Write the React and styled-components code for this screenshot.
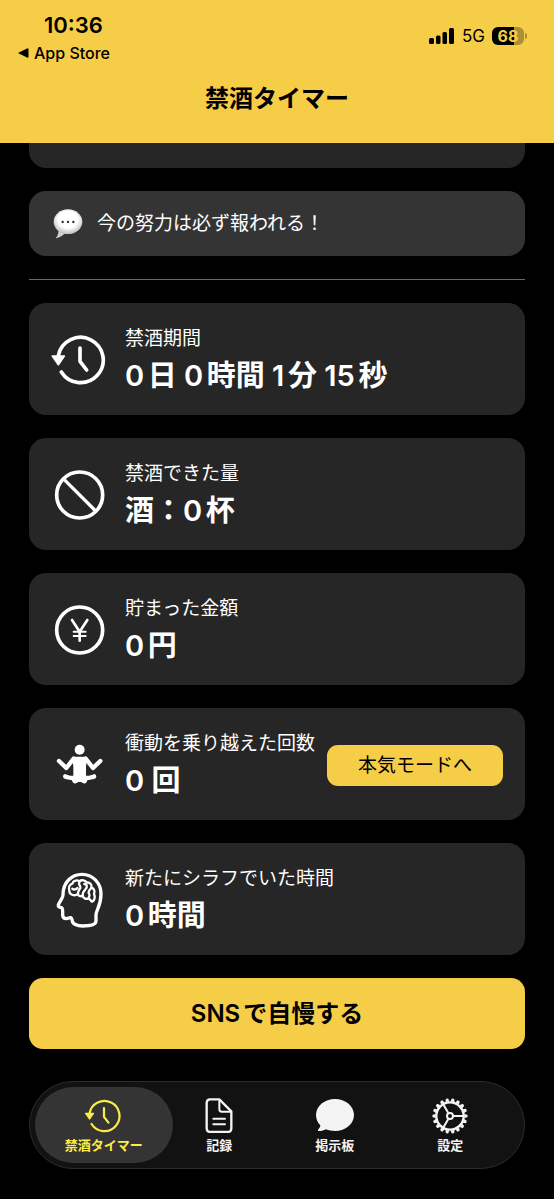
import React from 'react'
import styled, { createGlobalStyle } from 'styled-components'

const GlobalStyle = createGlobalStyle`
  * {
    box-sizing: border-box;
  }
  body {
    margin: 0;
    background: #000;
    color: #fff;
    font-family: Inter, 'Noto Sans CJK JP', sans-serif;
    text-autospace: normal;
  }
  button {
    border: 0;
    padding: 0;
    font-family: inherit;
    cursor: pointer;
  }
  svg {
    display: block;
    flex-shrink: 0;
  }
`

const ClockIcon = ({ width, stroke = 9 }) => (
  <svg width={width} viewBox="0 0 180 160" fill="none" stroke="currentColor" strokeWidth={stroke} strokeLinecap="round" strokeLinejoin="round" aria-hidden="true">
    <path d="M25 68A68 68 0 1 1 34 117" />
    <path d="M90 45V85L110 111" />
    <path d="M7 69H43L25 95Z" fill="currentColor" strokeWidth="5" />
  </svg>
)

const BanIcon = () => (
  <svg width="54" viewBox="0 0 162 162" fill="none" stroke="currentColor" strokeWidth="11" aria-hidden="true">
    <circle cx="80" cy="81" r="69" />
    <path d="M33 34L128 129" strokeWidth="10" />
  </svg>
)

const YenIcon = () => (
  <svg width="54" viewBox="0 0 162 162" fill="none" stroke="currentColor" strokeWidth="11" strokeLinecap="round" strokeLinejoin="round" aria-hidden="true">
    <circle cx="80" cy="81" r="69" />
    <path d="M57 51L80 86L103 51M80 86V113" strokeWidth="8" />
    <path d="M62 86H98M62 99H98" strokeWidth="6" />
  </svg>
)

const MeditationIcon = () => (
  <svg width="54" viewBox="0 0 162 162" fill="none" stroke="currentColor" strokeLinecap="round" strokeLinejoin="round" aria-hidden="true">
    <circle cx="80" cy="35" r="15" fill="currentColor" stroke="none" />
    <path d="M62 62L40 90L18 69" strokeWidth="13" />
    <path d="M98 62L120 90L142 69" strokeWidth="13" />
    <path d="M62 56H98L101 70L99 86V116H61V86L59 70Z" fill="currentColor" stroke="none" />
    <path
      d="M36 108C46 113 54 114 61 113H99C106 114 114 113 124 108Q131 110 130 116Q129 121 123 123L103 127Q101 138 91 136L84 132H76L69 136Q59 138 57 127L37 123Q31 121 30 116Q29 110 36 108Z"
      fill="currentColor"
      stroke="none"
    />
  </svg>
)

const HeadIcon = () => (
  <svg width="54" viewBox="-6 0 162 182" fill="none" stroke="currentColor" strokeWidth="10" strokeLinecap="round" strokeLinejoin="round" aria-hidden="true">
    <path d="M81 13C49 13 24 38 24 74C24 84 12 97 10 105C9 110 12 112 19 113C23 114 23 118 23 125V136C23 143 26 146 34 146L47 143C50 143 51 147 52 153C53 162 66 168 82 168C104 168 123 165 123 153V134C123 122 138 108 138 72C138 38 112 13 81 13Z" />
    <g strokeWidth="7">
      <path d="M52 41C55 31 67 29 73 34C80 28 92 31 95 38C104 36 112 44 109 52C119 56 120 66 117 72C122 80 118 92 112 95C105 93 108 87 101 86C92 88 84 84 83 78C76 80 70 77 68 73C58 79 42 74 43 62C40 53 43 44 52 41Z" />
      <path d="M52 56C57 61 64 58 67 54" />
      <path d="M73 37C69 45 77 46 76 53C75 58 69 60 69 71" />
      <path d="M88 42C96 42 98 51 92 57C86 63 82 68 83 78" />
      <path d="M109 54C103 60 97 67 103 73C105 77 102 82 100 85" />
    </g>
  </svg>
)

const BalloonIcon = () => (
  <svg width="30" viewBox="0 0 90 90" aria-hidden="true">
    <defs>
      <radialGradient id="balloon" cx="50%" cy="42%" r="56%">
        <stop offset="0.6" stopColor="#fff" />
        <stop offset="1" stopColor="#c4c4c4" />
      </radialGradient>
    </defs>
    <path d="M16 60C18 72 14 82 8 87C9 90 28 82 37 72Z" fill="#cfcfcf" />
    <ellipse cx="45" cy="38" rx="43" ry="37" fill="url(#balloon)" />
    <g fill="#222">
      <circle cx="29" cy="39" r="3.5" />
      <circle cx="45" cy="39" r="3.5" />
      <circle cx="61" cy="39" r="3.5" />
    </g>
  </svg>
)

const DocumentIcon = () => (
  <svg width="28" viewBox="0 0 84 106" fill="none" stroke="currentColor" strokeWidth="7" strokeLinecap="round" strokeLinejoin="round" aria-hidden="true">
    <path d="M15 4H43L79 40V90Q79 102 67 102H17Q5 102 5 90V15Q5 4 15 4Z" />
    <path d="M43 6V34Q43 41 50 41H77" strokeWidth="6" />
    <path d="M25 62H60M25 79H60" strokeWidth="6" />
  </svg>
)

const BubbleIcon = () => (
  <svg width="38" viewBox="0 0 114 98" fill="currentColor" aria-hidden="true">
    <path d="M57 0C88 0 114 21 114 48C114 75 89 96 57 96C47 96 38 94 30 91C22 95 14 97 7 96C5 95 5 93 7 91C11 87 13 83 13 79C5 71 0 60 0 48C0 21 26 0 57 0Z" />
  </svg>
)

const teeth = Array.from({ length: 18 }, (_, i) => i * 20)

const GearIcon = () => (
  <svg width="36" viewBox="-54 -54 108 108" fill="none" stroke="currentColor" strokeWidth="7" aria-hidden="true">
    <circle r="41" />
    <circle r="9" strokeWidth="6" />
    {[0, 120, 240].map((angle) => (
      <path key={angle} d="M10 0H40" strokeWidth="6" transform={`rotate(${angle})`} />
    ))}
    {teeth.map((angle) => (
      <path key={angle} d="M43 -6L52 -4Q54 0 52 4L43 6Z" fill="currentColor" stroke="none" transform={`rotate(${angle})`} />
    ))}
  </svg>
)

const SignalIcon = () => (
  <svg width="26" height="16" viewBox="0 0 26 16" fill="currentColor" aria-hidden="true">
    <rect x="0" y="10" width="5" height="6" rx="1.5" />
    <rect x="7" y="7.5" width="4.5" height="8.5" rx="1.5" />
    <rect x="13.5" y="4" width="4.5" height="12" rx="1.5" />
    <rect x="20" y="0" width="5" height="16" rx="1.5" />
  </svg>
)

const BackIcon = () => (
  <svg width="11" height="10" viewBox="0 0 11 10" fill="currentColor" aria-hidden="true">
    <path d="M0 5L9 0.4Q10.5 0 10.5 1.5V8.5Q10.5 10 9 9.6Z" />
  </svg>
)

const stats = [
  { label: '禁酒期間', value: '0日 0時間 1分 15秒', icon: <ClockIcon width={60} stroke={11} /> },
  { label: '禁酒できた量', value: '酒：0杯', icon: <BanIcon /> },
  { label: '貯まった金額', value: '0円', icon: <YenIcon /> },
  { label: '衝動を乗り越えた回数', value: '0 回', icon: <MeditationIcon />, action: '本気モードへ' },
  { label: '新たにシラフでいた時間', value: '0時間', icon: <HeadIcon /> },
]

const tabs = [
  { label: '禁酒タイマー', icon: <ClockIcon width={40} stroke={10} />, active: true },
  { label: '記録', icon: <DocumentIcon /> },
  { label: '掲示板', icon: <BubbleIcon /> },
  { label: '設定', icon: <GearIcon /> },
]

const App = () => {
  return (
    <Screen>
      <GlobalStyle />
      <Header>
        <StatusBar>
          <div>
            <Time>10:36</Time>
            <BackLink href="#">
              <BackIcon />
              App Store
            </BackLink>
          </div>
          <Indicators>
            <SignalIcon />
            <span>5G</span>
            <Battery>68</Battery>
          </Indicators>
        </StatusBar>
        <Title>禁酒タイマー</Title>
      </Header>
      <Main>
        <ScrolledCard />
        <Message>
          <BalloonIcon />
          今の努力は必ず報われる！
        </Message>
        <Divider />
        {stats.map((stat) => (
          <Card key={stat.label}>
            <IconCell>{stat.icon}</IconCell>
            <CardText>
              <Label>{stat.label}</Label>
              <Value>{stat.value}</Value>
            </CardText>
            {stat.action && <ModeButton type="button">{stat.action}</ModeButton>}
          </Card>
        ))}
        <ShareButton type="button">SNSで自慢する</ShareButton>
      </Main>
      <TabBar>
        {tabs.map((tab) => (
          <Tab key={tab.label} href="#" $active={tab.active} aria-current={tab.active ? 'page' : undefined}>
            <TabIcon>{tab.icon}</TabIcon>
            <span>{tab.label}</span>
          </Tab>
        ))}
      </TabBar>
    </Screen>
  )
}

export default App

const Screen = styled.div`
  display: flex;
  flex-direction: column;
  min-height: 100vh;
`

const Header = styled.header`
  background: #f6cd46;
  color: #000;
  padding: 11px 27px 26px 18px;
`

const StatusBar = styled.div`
  display: flex;
  justify-content: space-between;
  align-items: flex-start;
`

const Time = styled.div`
  padding-left: 26px;
  font-size: 22px;
  font-weight: 600;
  line-height: 28px;
`

const BackLink = styled.a`
  display: flex;
  align-items: center;
  gap: 5px;
  color: inherit;
  text-decoration: none;
  font-size: 16px;
  font-weight: 500;
  line-height: 28px;
`

const Indicators = styled.div`
  display: flex;
  align-items: center;
  gap: 7px;
  padding-top: 15px;
  font-size: 17px;
  line-height: 20px;
`

const Battery = styled.span`
  position: relative;
  width: 32px;
  height: 18px;
  margin-right: 3px;
  border-radius: 6px;
  background: linear-gradient(90deg, #000 68%, #a98f36 68%);
  color: #f6cd46;
  font-size: 16px;
  font-weight: 700;
  line-height: 18px;
  text-align: center;
  &::after {
    content: '';
    position: absolute;
    right: -3px;
    top: 6px;
    width: 2px;
    height: 6px;
    border-radius: 0 2px 2px 0;
    background: #a98f36;
  }
`

const Title = styled.h1`
  margin: 14px 0 0;
  padding-left: 9px;
  font-size: 24px;
  font-weight: 700;
  line-height: 36px;
  text-align: center;
`

const Main = styled.main`
  display: flex;
  flex-direction: column;
  gap: 23px;
  padding: 0 29px;
`

const ScrolledCard = styled.div`
  height: 25px;
  border-radius: 0 0 17px 17px;
  background: #262626;
`

const Message = styled.p`
  display: flex;
  align-items: center;
  gap: 14px;
  margin: 0;
  padding: 18px 24px 17px;
  border-radius: 17px;
  background: #343434;
  font-size: 19px;
  line-height: 28px;
`

const Divider = styled.hr`
  width: 100%;
  margin: 0;
  border: 0;
  border-top: 1px solid #6a6a6a;
`

const Card = styled.section`
  display: flex;
  align-items: center;
  gap: 18px;
  padding: 20px 22px 18px 24px;
  border-radius: 17px;
  background: #262626;
`

const IconCell = styled.div`
  display: flex;
  justify-content: center;
  width: 54px;
  flex-shrink: 0;
`

const CardText = styled.div`
  flex: 1;
  min-width: 0;
  white-space: nowrap;
`

const Label = styled.div`
  font-size: 19px;
  line-height: 32px;
`

const Value = styled.div`
  font-size: 29px;
  font-weight: 600;
  line-height: 42px;
`

const ModeButton = styled.button`
  padding: 0 31px;
  border-radius: 11px;
  background: #f6cd46;
  color: #000;
  font-size: 19px;
  line-height: 41px;
  white-space: nowrap;
`

const ShareButton = styled.button`
  border-radius: 14px;
  background: #f6cd46;
  color: #000;
  font-size: 24px;
  font-weight: 600;
  line-height: 71px;
`

const TabBar = styled.nav`
  display: flex;
  margin: auto 29px 30px;
  padding: 5px 16px;
  border: 1px solid #2c2c2c;
  border-radius: 44px;
  background: #121212;
`

const Tab = styled.a`
  position: relative;
  z-index: 0;
  flex: 1;
  display: flex;
  flex-direction: column;
  align-items: center;
  padding: 9px 0 8px;
  color: ${(props) => (props.$active ? '#fbec45' : '#f4f4f4')};
  font-size: 13px;
  font-weight: 600;
  line-height: 20px;
  text-decoration: none;
  &::before {
    content: '';
    position: absolute;
    z-index: -1;
    inset: 0 -11px;
    border-radius: 38px;
    background: ${(props) => (props.$active ? '#343434' : 'none')};
  }
`

const TabIcon = styled.span`
  display: flex;
  align-items: center;
  height: 39px;
`
